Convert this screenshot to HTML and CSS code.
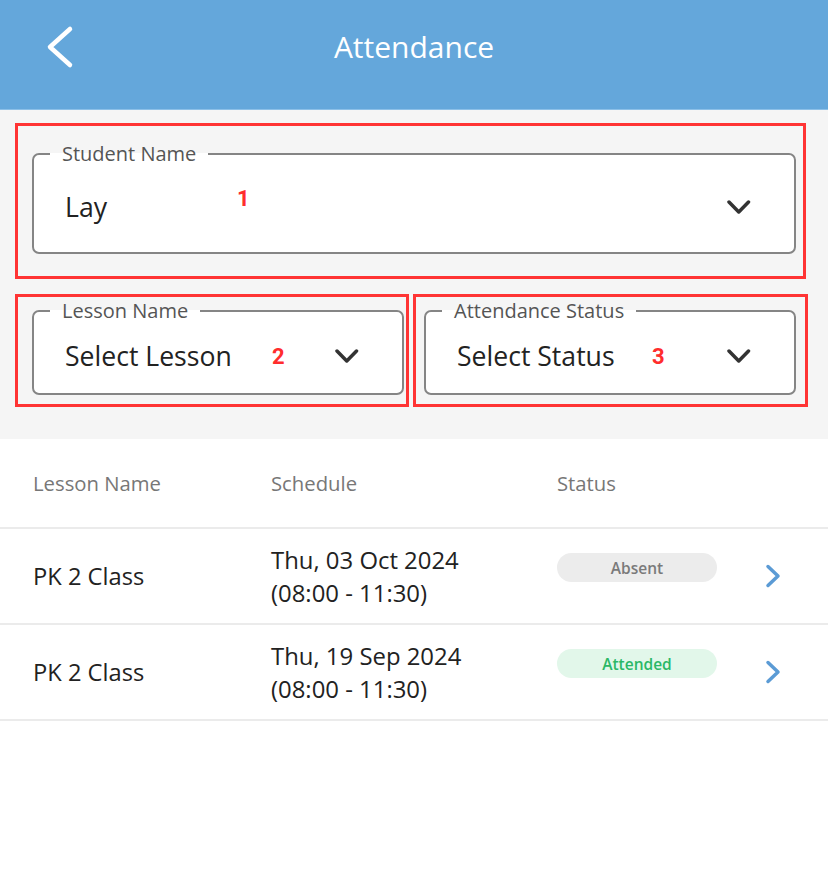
FILE: index.html
```html
<!DOCTYPE html>
<html lang="en">
<head>
<meta charset="utf-8">
<title>Attendance</title>
<link rel="stylesheet" href="styles.css">
</head>
<body>
<header class="appbar">
  <button class="back" aria-label="Back">
    <svg width="28" height="44" viewBox="0 0 28 44"><path d="M24 4 L4 22 L24 40" fill="none" stroke="#fff" stroke-width="4.5" stroke-linecap="round" stroke-linejoin="round"/></svg>
  </button>
  <h1 class="title">Attendance</h1>
  <span></span>
</header>

<section class="filters">
  <div class="mark mark-1">
    <fieldset class="field field-lg">
      <legend>Student Name</legend>
      <div class="field-body">
        <span class="value">Lay</span>
        <svg class="caret" width="24" height="14" viewBox="0 0 24 14"><path d="M2 2 L11.75 12 L21.5 2" fill="none" stroke="#333" stroke-width="3.5" stroke-linecap="round" stroke-linejoin="round"/></svg>
      </div>
    </fieldset>
    <span class="num num-1">1</span>
  </div>
  <div class="row2">
    <div class="mark mark-2">
      <fieldset class="field field-sm">
        <legend>Lesson Name</legend>
        <div class="field-body">
          <span class="value">Select Lesson</span>
          <svg class="caret" width="24" height="14" viewBox="0 0 24 14"><path d="M2 2 L11.75 12 L21.5 2" fill="none" stroke="#333" stroke-width="3.5" stroke-linecap="round" stroke-linejoin="round"/></svg>
        </div>
      </fieldset>
      <span class="num num-2">2</span>
    </div>
    <div class="mark mark-3">
      <fieldset class="field field-sm">
        <legend>Attendance Status</legend>
        <div class="field-body">
          <span class="value">Select Status</span>
          <svg class="caret" width="24" height="14" viewBox="0 0 24 14"><path d="M2 2 L11.75 12 L21.5 2" fill="none" stroke="#333" stroke-width="3.5" stroke-linecap="round" stroke-linejoin="round"/></svg>
        </div>
      </fieldset>
      <span class="num num-3">3</span>
    </div>
  </div>
</section>

<section class="table">
  <div class="trow thead">
    <span>Lesson Name</span>
    <span>Schedule</span>
    <span>Status</span>
    <span></span>
  </div>
  <div class="trow tbody">
    <span class="lesson">PK 2 Class</span>
    <span class="sched">Thu, 03 Oct 2024<br>(08:00 - 11:30)</span>
    <span class="badge badge-absent">Absent</span>
    <svg class="go" width="16" height="24" viewBox="0 0 16 24"><path d="M3 2.5 L13 12 L3 21.5" fill="none" stroke="#5b9bd5" stroke-width="3.5" stroke-linecap="round" stroke-linejoin="round"/></svg>
  </div>
  <div class="trow tbody">
    <span class="lesson">PK 2 Class</span>
    <span class="sched">Thu, 19 Sep 2024<br>(08:00 - 11:30)</span>
    <span class="badge badge-attended">Attended</span>
    <svg class="go" width="16" height="24" viewBox="0 0 16 24"><path d="M3 2.5 L13 12 L3 21.5" fill="none" stroke="#5b9bd5" stroke-width="3.5" stroke-linecap="round" stroke-linejoin="round"/></svg>
  </div>
</section>
</body>
</html>
```

FILE: styles.css
```css
* { box-sizing: border-box; }

body {
  margin: 0;
  background: #ffffff;
  font-family: "Open Sans", "Noto Sans", sans-serif;
  color: #222;
}

.appbar {
  height: 110px;
  background: #64a7db;
  border-bottom: 1px solid #8cc0e8;
  display: grid;
  grid-template-columns: 1fr auto 1fr;
  align-items: start;
}

.back {
  justify-self: start;
  background: none;
  border: 0;
  padding: 25px 0 0 46px;
  margin: 0;
  cursor: pointer;
  line-height: 0;
}

.title {
  margin: 0;
  padding-top: 27px;
  font-size: 30px;
  line-height: 40px;
  font-weight: 400;
  color: #ffffff;
  letter-spacing: 0;
}

.filters {
  background: #f5f5f5;
  padding: 13px 22px 32px 15px;
}

.mark {
  position: relative;
  border: 3px solid #ff3434;
}

.mark-1 {
  padding: 16px 7px 22px 14px;
}

.row2 {
  display: flex;
  gap: 4px;
  margin-top: 15px;
  margin-right: -2px;
}

.mark-2 {
  flex: 0 0 394px;
  padding: 2px 2px 9px 14px;
}

.mark-3 {
  flex: 0 0 395px;
  padding: 2px 9px 9px 8px;
}

.field {
  margin: 0;
  padding: 0;
  border: 2px solid #858585;
  border-radius: 7px;
  background: #ffffff;
  min-width: 0;
}

.field legend {
  margin-left: 16px;
  padding: 0 12px;
  font-size: 20px;
  line-height: 24px;
  color: #555;
}

.field-body {
  display: flex;
  align-items: center;
  justify-content: space-between;
  padding: 0 43px 4px 31px;
}

.field-lg .field-body { height: 86px; }
.field-sm .field-body { height: 70px; }

.value {
  font-size: 26.6px;
  color: #222;
}

.caret { display: block; }

.num {
  position: absolute;
  font-family: Roboto, "Liberation Sans", sans-serif;
  font-weight: 700;
  font-size: 22px;
  line-height: 1;
  color: #ff2d2d;
}

.num-1 { left: 219px; top: 62px; }
.num-2 { left: 254px; top: 49px; }
.num-3 { left: 236px; top: 49px; }

.trow {
  display: grid;
  grid-template-columns: 238px 286px 160px 16px;
  column-gap: 0;
  padding-left: 33px;
  border-bottom: 2px solid #ebebeb;
}

.trow > :last-child { margin-left: 48px; }

.thead {
  height: 90px;
  align-items: center;
  font-size: 20.3px;
  color: #777;
}

.tbody {
  height: 96px;
  align-items: center;
}

.lesson {
  font-size: 23.7px;
  color: #222;
}

.sched {
  font-size: 23.9px;
  line-height: 33px;
  color: #222;
}

.badge {
  align-self: start;
  margin-top: 24px;
  height: 29px;
  border-radius: 15px;
  display: flex;
  align-items: center;
  justify-content: center;
  font-size: 15.5px;
  font-weight: 600;
}

.badge-absent {
  background: #ececec;
  color: #7a7a7a;
}

.badge-attended {
  background: #e2f7ea;
  color: #2bb866;
}

.go { display: block; }
```
